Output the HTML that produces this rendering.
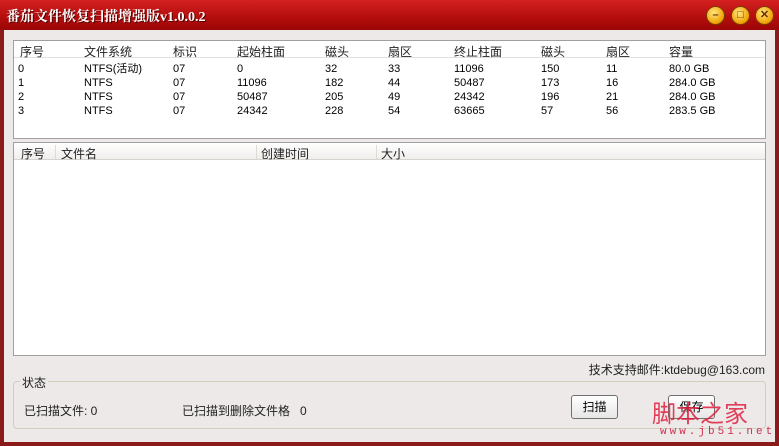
<!DOCTYPE html>
<html><head><meta charset="utf-8"><style>
*{margin:0;padding:0;box-sizing:border-box}
body{width:779px;height:446px;overflow:hidden;background:#8b1a1a;font-family:"Liberation Sans","Noto Sans CJK SC",sans-serif;font-size:12px;color:#000;position:relative}
.title{position:absolute;left:0;top:0;width:779px;height:30px;background:linear-gradient(#d42020,#b30d0d 60%,#9a0606);}
.title span{position:absolute;left:6px;top:6px;color:#fff;font-weight:bold;font-size:14px;font-family:"Liberation Serif","Noto Serif CJK SC",serif;text-shadow:1px 1px 0 #500}
.btn{position:absolute;top:6px;width:19px;height:19px;border-radius:50%;background:radial-gradient(circle at 40% 35%,#ffe680,#f0a000 70%,#b86a00);border:1px solid #7a3a00;color:#6a3000;font-size:11px;text-align:center;line-height:17px;font-weight:bold}
.client{position:absolute;left:4px;top:30px;width:771px;height:412px;background:#ece9e8}
.box{position:absolute;background:#fff;border:1px solid #a0a0a0}
.t{position:absolute;white-space:nowrap;font-size:11px}
.h{font-size:12px;color:#222}
.hdr{position:absolute;left:0;top:0;right:0;height:17px;background:linear-gradient(#fff,#f1efec);border-bottom:1px solid #d6d3ce}
.sep{position:absolute;top:2px;width:1px;height:14px;background:#dedad4}
.group{position:absolute;left:13px;top:381px;width:753px;height:48px;border:1px solid #d0d0bf;border-radius:4px}
.pb{position:absolute;top:395px;width:47px;height:24px;border:1px solid #707070;border-radius:3px;background:linear-gradient(#fff,#e6e6e6);text-align:center;line-height:22px;font-size:12px}
</style></head><body>
<div class="title"><span>番茄文件恢复扫描增强版v1.0.0.2</span>
<div class="btn" style="left:706px">–</div><div class="btn" style="left:731px">□</div><div class="btn" style="left:755px">✕</div></div>
<div class="client"></div>

<div class="box" style="left:13px;top:40px;width:753px;height:99px">
<div class="hdr" style="background:#fff;border-bottom:1px solid #e0e0e0"></div>
<div class="t h" style="left:6px;top:2px">序号</div>
<div class="t h" style="left:70px;top:2px">文件系统</div>
<div class="t h" style="left:159px;top:2px">标识</div>
<div class="t h" style="left:223px;top:2px">起始柱面</div>
<div class="t h" style="left:311px;top:2px">磁头</div>
<div class="t h" style="left:374px;top:2px">扇区</div>
<div class="t h" style="left:440px;top:2px">终止柱面</div>
<div class="t h" style="left:527px;top:2px">磁头</div>
<div class="t h" style="left:592px;top:2px">扇区</div>
<div class="t h" style="left:655px;top:2px">容量</div>
<div class="t" style="left:4px;top:21px;line-height:14px">0<br>1<br>2<br>3</div>
<div class="t" style="left:70px;top:21px;line-height:14px">NTFS(活动)<br>NTFS<br>NTFS<br>NTFS</div>
<div class="t" style="left:159px;top:21px;line-height:14px">07<br>07<br>07<br>07</div>
<div class="t" style="left:223px;top:21px;line-height:14px">0<br>11096<br>50487<br>24342</div>
<div class="t" style="left:311px;top:21px;line-height:14px">32<br>182<br>205<br>228</div>
<div class="t" style="left:374px;top:21px;line-height:14px">33<br>44<br>49<br>54</div>
<div class="t" style="left:440px;top:21px;line-height:14px">11096<br>50487<br>24342<br>63665</div>
<div class="t" style="left:527px;top:21px;line-height:14px">150<br>173<br>196<br>57</div>
<div class="t" style="left:592px;top:21px;line-height:14px">11<br>16<br>21<br>56</div>
<div class="t" style="left:655px;top:21px;line-height:14px">80.0 GB<br>284.0 GB<br>284.0 GB<br>283.5 GB</div>
</div>

<div class="box" style="left:13px;top:142px;width:753px;height:214px">
<div class="hdr"></div>
<div class="sep" style="left:41px"></div><div class="sep" style="left:242px"></div><div class="sep" style="left:362px"></div>
<div class="t h" style="left:7px;top:2px">序号</div>
<div class="t h" style="left:47px;top:2px">文件名</div>
<div class="t h" style="left:247px;top:2px">创建时间</div>
<div class="t h" style="left:367px;top:2px">大小</div>
</div>

<div class="t h" style="right:14px;top:361px;color:#222">技术支持邮件:ktdebug@163.com</div>
<div class="group"></div>
<div class="t h" style="left:20px;top:374px;background:#ece9e8;padding:0 2px">状态</div>
<div class="t h" style="left:24px;top:402px">已扫描文件: 0</div>
<div class="t h" style="left:182px;top:402px">已扫描到删除文件格&nbsp;&nbsp;&nbsp;0</div>
<div class="pb" style="left:571px">扫描</div>
<div class="pb" style="left:668px">保存</div>
<div class="t" style="left:652px;top:394px;font-size:24px;color:#e02040;font-family:'Noto Sans CJK SC',sans-serif;opacity:.85">脚本之家</div>
<div class="t" style="left:660px;top:426px;font-size:11px;color:#d03050;letter-spacing:3px;font-family:'Liberation Mono',monospace">www.jb51.net</div>
</body></html>
